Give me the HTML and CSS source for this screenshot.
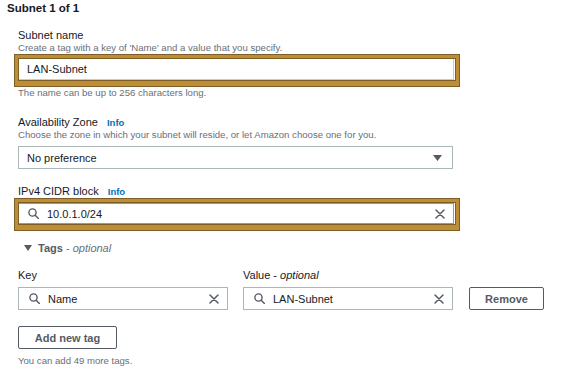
FILE: index.html
```html
<!DOCTYPE html>
<html lang="en">
<head>
<meta charset="utf-8">
<title>Subnet settings</title>
<link rel="stylesheet" href="styles.css">
</head>
<body>
<div class="page">
  <h2 class="title">Subnet 1 of 1</h2>
  <div class="body">
    <div class="label label-first">Subnet name</div>
    <div class="help">Create a tag with a key of 'Name' and a value that you specify.</div>
    <div class="hl">
      <div class="hl-inner">
        <div class="input">LAN-Subnet</div>
      </div>
    </div>
    <div class="note">The name can be up to 256 characters long.</div>

    <div class="label label-sec">Availability Zone <span class="info">Info</span></div>
    <div class="help">Choose the zone in which your subnet will reside, or let Amazon choose one for you.</div>
    <div class="select">
      <span>No preference</span>
      <svg class="caret" width="9" height="6" viewBox="0 0 9 6"><path d="M0 0H9L4.5 6Z" fill="#545b64"/></svg>
    </div>

    <div class="label label-cidr">IPv4 CIDR block <span class="info">Info</span></div>
    <div class="hl">
      <div class="hl-inner">
        <div class="input input-search focused">
          <svg class="search" width="11" height="11" viewBox="0 0 11 11"><circle cx="4.5" cy="4.5" r="3.6" fill="none" stroke="#545b64" stroke-width="1.4"/><path d="M7.2 7.2L10.4 10.4" stroke="#545b64" stroke-width="1.4" stroke-linecap="round"/></svg>
          <span class="val">10.0.1.0/24</span>
          <svg class="clear" width="10" height="10" viewBox="0 0 10 10"><path d="M1 1L9 9M9 1L1 9" stroke="#545b64" stroke-width="1.5" stroke-linecap="round"/></svg>
        </div>
      </div>
    </div>

    <div class="tags">
      <svg class="tri" width="8" height="6" viewBox="0 0 8 6"><path d="M0 0H8L4 6Z" fill="#545b64"/></svg>
      <span class="tags-title">Tags</span><span class="opt"> - <i>optional</i></span>
    </div>

    <div class="tag-head">
      <div class="col">Key</div>
      <div class="col">Value - <i>optional</i></div>
    </div>
    <div class="tag-row">
      <div class="input input-search small">
        <svg class="search" width="11" height="11" viewBox="0 0 11 11"><circle cx="4.5" cy="4.5" r="3.6" fill="none" stroke="#545b64" stroke-width="1.4"/><path d="M7.2 7.2L10.4 10.4" stroke="#545b64" stroke-width="1.4" stroke-linecap="round"/></svg>
        <span class="val">Name</span>
        <svg class="clear" width="10" height="10" viewBox="0 0 10 10"><path d="M1 1L9 9M9 1L1 9" stroke="#545b64" stroke-width="1.5" stroke-linecap="round"/></svg>
      </div>
      <div class="input input-search small">
        <svg class="search" width="11" height="11" viewBox="0 0 11 11"><circle cx="4.5" cy="4.5" r="3.6" fill="none" stroke="#545b64" stroke-width="1.4"/><path d="M7.2 7.2L10.4 10.4" stroke="#545b64" stroke-width="1.4" stroke-linecap="round"/></svg>
        <span class="val">LAN-Subnet</span>
        <svg class="clear" width="10" height="10" viewBox="0 0 10 10"><path d="M1 1L9 9M9 1L1 9" stroke="#545b64" stroke-width="1.5" stroke-linecap="round"/></svg>
      </div>
      <button class="btn btn-remove">Remove</button>
    </div>

    <button class="btn btn-add">Add new tag</button>
    <div class="note foot">You can add 49 more tags.</div>
  </div>
</div>
</body>
</html>
```

FILE: styles.css
```css
* { box-sizing: border-box; }
html, body { margin: 0; padding: 0; background: #fff; }
body {
  font-family: "Liberation Sans", Arial, sans-serif;
  color: #16191f;
  width: 577px;
  height: 372px;
  overflow: hidden;
}
.page { padding: 0 0 0 7px; }
.title {
  margin: 0;
  font-size: 11.5px;
  line-height: 16px;
  font-weight: bold;
}
.body { padding-left: 7px; }
.label {
  font-size: 11px;
  line-height: 14px;
  height: 14px;
  padding-left: 4px;
}
.label-first { margin-top: 12px; }
.label-sec { margin-top: 16px; }
.label-cidr { margin-top: 15px; }
.info {
  color: #0073bb;
  font-weight: bold;
  font-size: 9.5px;
  line-height: 1;
  margin-left: 6px;
}
.help, .note {
  font-size: 9.6px;
  line-height: 12px;
  height: 12px;
  color: #687078;
  padding-left: 4px;
  white-space: nowrap;
}
.hl {
  width: 446px;
  height: 33px;
  border: 1px solid #7d5e24;
  background: #bd8d38;
  padding: 3px;
}
.hl-inner {
  height: 23px;
  border: 1px solid #7d5e24;
  background: #fff;
  display: flex;
}
.input {
  width: 435px;
  height: 21px;
  border: 1px solid #c6cccd;
  border-top: 0;
  border-left: 0;
  font-size: 11px;
  line-height: 20px;
  padding-left: 8px;
  display: flex;
  align-items: center;
}
.input.focused {
  border: 1px solid #47b6d3;
  border-left: 0;
  height: 21px;
}
.input-search .search { margin-left: 1px; flex: none; }
.input-search .val { margin-left: 8px; flex: 1; }
.input-search .clear { flex: none; margin-right: 8px; }
.select {
  margin-top: 5px;
  margin-left: 4px;
  width: 435px;
  height: 23px;
  border: 1px solid #aab7b8;
  font-size: 11px;
  padding: 0 10px 0 8px;
  display: flex;
  align-items: center;
  justify-content: space-between;
}
.tags {
  margin-top: 10px;
  padding-left: 10px;
  font-size: 11px;
  line-height: 14px;
  height: 14px;
  display: flex;
  align-items: center;
}
.tri { margin-right: 6px; }
.tags-title { font-weight: bold; color: #545b64; }
.opt { color: #687078; white-space: pre; }
.tag-head {
  margin-top: 13px;
  padding-left: 4px;
  display: flex;
  gap: 15px;
  font-size: 11px;
  line-height: 14px;
  height: 14px;
}
.tag-head .col { width: 210px; }
.tag-row {
  margin-top: 5px;
  padding-left: 4px;
  display: flex;
  gap: 15px;
  align-items: center;
}
.input.small {
  width: 210px;
  height: 23px;
  border: 1px solid #aab7b8;
  padding-left: 9px;
}
.btn {
  font-family: "Liberation Sans", Arial, sans-serif;
  background: #fff;
  border: 1px solid #545b64;
  border-radius: 2px;
  color: #545b64;
  font-weight: bold;
  font-size: 11px;
  height: 23px;
  padding: 0;
}
.btn-remove { width: 75px; margin-left: 1px; }
.btn-add {
  display: block;
  margin: 16px 0 0 4px;
  width: 99px;
}
.foot { margin-top: 6px; }
```
